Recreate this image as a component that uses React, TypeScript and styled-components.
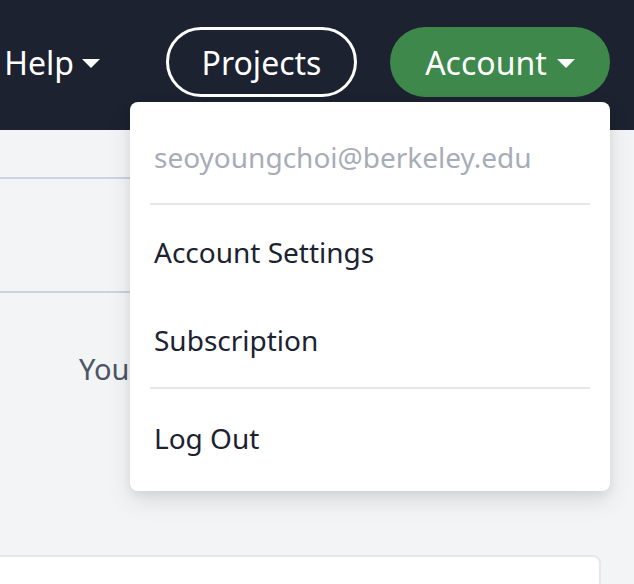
import styled, { createGlobalStyle } from "styled-components";

const GlobalStyle = createGlobalStyle`
  html, body {
    margin: 0;
    padding: 0;
    background: #f3f4f6;
    font-family: "Noto Sans", "Open Sans", sans-serif;
  }
  * { box-sizing: border-box; }
`;

const Page = styled.div`
  width: 634px;
  height: 584px;
  overflow: hidden;
  background: #f3f4f6;
`;

const TopBar = styled.header`
  position: relative;
  height: 130px;
  background: #1c2230;
  display: flex;
  align-items: center;
  justify-content: flex-end;
  padding: 0 24px 6px 0;
  color: #ffffff;
`;

const Nav = styled.nav`
  display: flex;
  align-items: center;
`;

const HelpLink = styled.div`
  display: flex;
  align-items: center;
  gap: 8px;
  font-size: 32px;
  margin-right: 66px;
`;

const Caret = styled.span`
  width: 0;
  height: 0;
  border-left: 9px solid transparent;
  border-right: 9px solid transparent;
  border-top: 9px solid #ffffff;
  margin-top: 2px;
`;

const PillButton = styled.div<{ $filled?: boolean }>`
  height: 70px;
  border-radius: 35px;
  display: flex;
  align-items: center;
  justify-content: center;
  gap: 10px;
  font-size: 32px;
  color: #ffffff;
  border: ${(p) => (p.$filled ? "none" : "3px solid #ffffff")};
  background: ${(p) => (p.$filled ? "#3d884a" : "transparent")};
`;

const ProjectsButton = styled(PillButton)`
  width: 191px;
  margin-right: 33px;
`;

const AccountButton = styled(PillButton)`
  width: 220px;
`;

const Menu = styled.div`
  position: absolute;
  top: 102px;
  right: 24px;
  width: 480px;
  background: #ffffff;
  border-radius: 8px;
  box-shadow: 0 10px 25px rgba(0, 0, 0, 0.1), 0 4px 10px rgba(0, 0, 0, 0.06);
  padding: 12px 0 9px;
  z-index: 10;
`;

const MenuItem = styled.div<{ $muted?: boolean }>`
  padding: 0 24px;
  height: ${(p) => (p.$muted ? "86px" : "88px")};
  display: flex;
  align-items: center;
  font-size: 28px;
  color: ${(p) => (p.$muted ? "#a7adb8" : "#1c2230")};
`;

const Divider = styled.div<{ $below: number }>`
  height: 2px;
  background: #e5e7eb;
  margin: 3px 20px ${(p) => p.$below}px;
`;

const Content = styled.main`
  display: flex;
  flex-direction: column;
  width: 601px;
`;

const Banner = styled.div`
  margin-top: 47px;
  height: 116px;
  border-top: 2px solid #c9d3e1;
  border-bottom: 2px solid #c9d3e1;
`;

const EmptyNote = styled.p`
  margin: 56px 0 0 79px;
  font-size: 29px;
  color: #4b5563;
  line-height: 40px;
`;

const Card = styled.div`
  margin-top: 166px;
  margin-left: -10px;
  height: 60px;
  background: #ffffff;
  border: 2px solid #e5e7eb;
  border-radius: 8px;
`;

export default function App() {
  return (
    <Page>
      <GlobalStyle />
      <TopBar>
        <Nav>
          <HelpLink>
            Help <Caret />
          </HelpLink>
          <ProjectsButton>Projects</ProjectsButton>
          <AccountButton $filled>
            Account <Caret />
          </AccountButton>
        </Nav>
        <Menu>
          <MenuItem $muted>seoyoungchoi@berkeley.edu</MenuItem>
          <Divider $below={3} />
          <MenuItem>Account Settings</MenuItem>
          <MenuItem>Subscription</MenuItem>
          <Divider $below={5} />
          <MenuItem>Log Out</MenuItem>
        </Menu>
      </TopBar>
      <Content>
        <Banner />
        <EmptyNote>You have no projects yet.</EmptyNote>
        <Card />
      </Content>
    </Page>
  );
}
